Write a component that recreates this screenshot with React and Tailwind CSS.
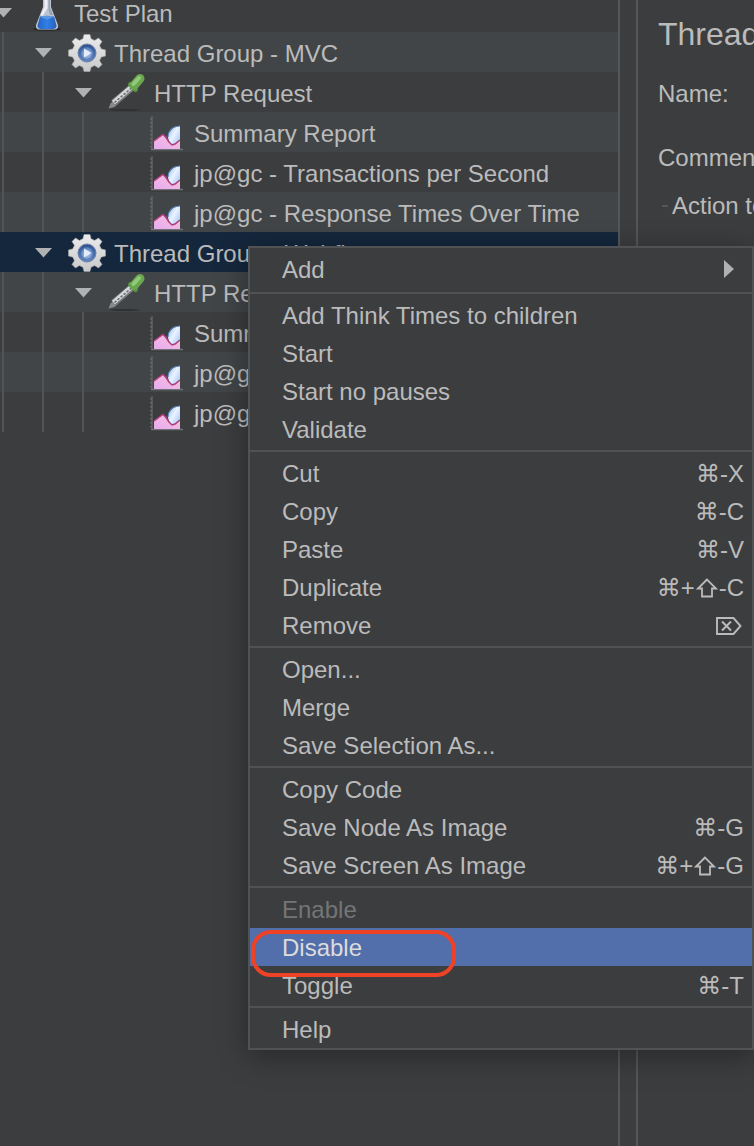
import { useId } from "react";

function FlaskIcon() {
  const id = useId();
  return (
    <svg width="32" height="36" viewBox="0 0 32 36" aria-hidden="true">
      <defs>
        <linearGradient id={id} x1="0" x2="1">
          <stop offset="0" stopColor="#2a63bd" />
          <stop offset="0.5" stopColor="#2f80ea" />
          <stop offset="1" stopColor="#2a5fb4" />
        </linearGradient>
      </defs>
      <ellipse cx="16" cy="34" rx="14" ry="1.8" fill="#27292c" />
      <path d="M11.500 0h9l-.5 4v8l7 18q.5 4-3 4.500h-16q-3.500-.5-3-4.500L12 12V4z" fill="#bcc4d2" />
      <path d="M13.500 0h3v13l-5 8-2-1 4-8z" fill="#eef0f5" />
      <path d="M17.500 3h1.500v10l3 7h-3l-1.500-6z" fill="#98a0b1" />
      <path d="M9 21.500h14l2.500 9q0 3-3 3.500h-13q-3-.5-3-3.500z" fill={`url(#${id})`} />
      <path d="M9 22l7-1.500L23 22l-7 2.500z" fill="#5b97e2" />
    </svg>
  );
}

function GearIcon() {
  const id = useId();
  return (
    <svg width="38" height="38" viewBox="0 0 38 38" aria-hidden="true">
      <defs>
        <linearGradient id={`${id}a`} x1="0" y1="0" x2="0" y2="1">
          <stop offset="0" stopColor="#ececec" />
          <stop offset="1" stopColor="#c9c9c9" />
        </linearGradient>
        <linearGradient id={`${id}b`} x1="0" y1="0" x2="0" y2="1">
          <stop offset="0" stopColor="#2f4f8c" />
          <stop offset="1" stopColor="#6288c6" />
        </linearGradient>
        <radialGradient id={`${id}c`} cx="0.5" cy="0.6" r="0.55">
          <stop offset="0" stopColor="#c4d8f3" />
          <stop offset="1" stopColor="#5379b8" />
        </radialGradient>
      </defs>
      <circle cx="19" cy="19" r="14.500" fill={`url(#${id}a)`} stroke="#a2a3a4" strokeWidth="0.600" />
      <path
        d="M16 .5h6l1.200 4.500 3.300 1.500L30.500 4 34 7.500l-2.500 4 1.500 3.300L37.500 16v6L33 23.200l-1.500 3.300 2.500 4-3.500 3.500-4-2.500-3.300 1.500L22 37.500h-6L14.800 33l-3.300-1.500-4 2.500L4 30.500l2.500-4L5 23.200.5 22v-6L5 14.800l1.500-3.300L4 7.500 7.500 4l4 2.500L14.800 5z"
        fill={`url(#${id}a)`}
        stroke="#a2a3a4"
        strokeWidth="0.600"
      />
      <circle cx="19" cy="19" r="9" fill={`url(#${id}b)`} stroke="#6c82ab" strokeWidth="1" />
      <circle cx="19" cy="19" r="6" fill={`url(#${id}c)`} />
      <path d="M16 14.500l7.500 4.500-7.500 4.500z" fill="#e3ecfa" />
    </svg>
  );
}

function PipetteIcon() {
  return (
    <svg width="38" height="38" viewBox="0 0 38 38" aria-hidden="true">
      <ellipse cx="17" cy="36" rx="15" ry="1" fill="#2f3032" />
      <path d="M0.500 34.500l2-5 4-4 4 4-4 3.500z" fill="#88898b" />
      <path d="M5.500 29L25 12.500" stroke="#77797b" strokeWidth="7" />
      <path d="M5.500 28.500L24 12.500" stroke="#d6d7d8" strokeWidth="4.500" />
      <path d="M6.500 28.500L24 13.500" stroke="#66686a" strokeWidth="1.500" strokeDasharray="2.500 1.500" />
      <path d="M22.500 10.500l5 5" stroke="#56943d" strokeWidth="5" strokeLinecap="round" />
      <path d="M26 11.500l6-7" stroke="#69a64f" strokeWidth="9" strokeLinecap="round" />
      <path d="M25.500 10l5.500-6" stroke="#93c97a" strokeWidth="4" strokeLinecap="round" />
    </svg>
  );
}

function ChartIcon() {
  const id = useId();
  return (
    <svg width="36" height="36" viewBox="0 0 36 36" aria-hidden="true">
      <defs>
        <linearGradient id={`${id}a`} x1="0" y1="0" x2="1" y2="1">
          <stop offset="0" stopColor="#8fb6ee" />
          <stop offset="0.45" stopColor="#eaf3ff" />
          <stop offset="1" stopColor="#94bbf2" />
        </linearGradient>
        <linearGradient id={`${id}b`} x1="0" y1="1" x2="1" y2="0">
          <stop offset="0" stopColor="#e9a9f0" />
          <stop offset="1" stopColor="#f4c6da" />
        </linearGradient>
      </defs>
      <path d="M3 1v33" stroke="#5f6264" strokeWidth="1.500" />
      <path d="M2 3v30" stroke="#66696b" strokeWidth="2" strokeDasharray="1.500 2.500" />
      <path d="M2 34.500h32" stroke="#707375" strokeWidth="1.500" />
      <path d="M31 11v17l-7 4-4-6q-2-4 0-8 3-6 11-7z" fill={`url(#${id}a)`} />
      <path d="M19 22q0-5 3-8 3-3 9-3" fill="none" stroke="#5c86cf" strokeWidth="1" />
      <path d="M5 34v-8l4-3 5-4 3 3 3 5 3 3 3-1 5-4v9z" fill={`url(#${id}b)`} />
      <path d="M5 26l4-3 5-3.500 3 3 3 4.500 3 3 3-1 5-4" fill="none" stroke="#b13c78" strokeWidth="1.500" />
    </svg>
  );
}

const ICONS = { flask: FlaskIcon, gear: GearIcon, pipette: PipetteIcon, chart: ChartIcon };

const ROWS = [
  { label: "Test Plan", icon: "flask", level: 0, open: true },
  { label: "Thread Group - MVC", icon: "gear", level: 1, open: true },
  { label: "HTTP Request", icon: "pipette", level: 2, open: true },
  { label: "Summary Report", icon: "chart", level: 3 },
  { label: "jp@gc - Transactions per Second", icon: "chart", level: 3 },
  { label: "jp@gc - Response Times Over Time", icon: "chart", level: 3 },
  { label: "Thread Group - Webflux", icon: "gear", level: 1, open: true, selected: true },
  { label: "HTTP Request", icon: "pipette", level: 2, open: true },
  { label: "Summary Report", icon: "chart", level: 3 },
  { label: "jp@gc - Transactions per Second", icon: "chart", level: 3 },
  { label: "jp@gc - Response Times Over Time", icon: "chart", level: 3 },
];

function TreeRow({ row, index }) {
  const Icon = ICONS[row.icon];
  const background = row.selected ? "bg-[#15273d]" : index % 2 ? "bg-[#414547]" : "bg-[#3c3d3f]";
  return (
    <li className={`flex h-10 items-center ${background}`}>
      {Array.from({ length: row.level }, (_, i) => (
        <span key={i} className="flex h-full w-10 shrink-0 pl-0.5">
          {!row.selected && <span className="w-0.5 bg-[#525456]" />}
        </span>
      ))}
      <button className="flex h-full items-center pt-0.5 whitespace-nowrap">
        <span className="flex w-7 shrink-0">
          {row.open && (
            <svg width="18" height="10" viewBox="0 0 18 10" className="-ml-1.5 shrink-0" aria-hidden="true">
              <path d="M1 0h17L9.500 9.500z" fill="#afb1b3" />
            </svg>
          )}
        </span>
        <span className="flex w-10 shrink-0 justify-center pr-0.5">
          <Icon />
        </span>
        <span className="pt-0.5 pl-1.5">{row.label}</span>
      </button>
    </li>
  );
}

function ShiftKey() {
  return (
    <svg width="22" height="20" viewBox="0 0 22 20" role="img" aria-label="Shift" className="mx-px">
      <path d="M11 1.500L2 10.500H6V18.500H16V10.500H20z" fill="none" stroke="currentColor" strokeWidth="1.800" />
    </svg>
  );
}

function DeleteKey() {
  return (
    <svg width="26" height="18" viewBox="0 0 26 18" role="img" aria-label="Delete" className="mr-0.5">
      <path d="M1 1h16.500l7 8-7 8H1z" fill="none" stroke="currentColor" strokeWidth="1.900" />
      <path d="M6 4.500l9 9M15 4.500l-9 9" stroke="currentColor" strokeWidth="2" />
    </svg>
  );
}

const MENU = [
  [{ label: "Add", submenu: true }],
  [{ label: "Add Think Times to children" }, { label: "Start" }, { label: "Start no pauses" }, { label: "Validate" }],
  [
    { label: "Cut", keys: "⌘-X" },
    { label: "Copy", keys: "⌘-C" },
    { label: "Paste", keys: "⌘-V" },
    { label: "Duplicate", keys: <>⌘+<ShiftKey />-C</> },
    { label: "Remove", keys: <DeleteKey /> },
  ],
  [{ label: "Open..." }, { label: "Merge" }, { label: "Save Selection As..." }],
  [
    { label: "Copy Code" },
    { label: "Save Node As Image", keys: "⌘-G" },
    { label: "Save Screen As Image", keys: <>⌘+<ShiftKey />-G</> },
  ],
  [{ label: "Enable", disabled: true }, { label: "Disable", active: true }, { label: "Toggle", keys: "⌘-T" }],
  [{ label: "Help" }],
];

function MenuItem({ item }) {
  const height = item.submenu ? "h-[42px]" : "h-[38px]";
  const color = item.active
    ? "bg-[#526eab] text-[#dcdcdc]"
    : item.disabled
      ? "text-[#747576]"
      : "text-[#bbbbbb]";
  return (
    <button
      role="menuitem"
      disabled={item.disabled}
      className={`relative flex w-full items-center justify-between pt-0.5 pr-2 pl-8 text-left ${height} ${color}`}
    >
      <span>{item.label}</span>
      {item.keys && <span className="flex items-center">{item.keys}</span>}
      {item.submenu && (
        <svg width="10" height="18" viewBox="0 0 10 18" className="mr-2.5 mb-0.5" aria-hidden="true">
          <path d="M0 0l10 9-10 9z" fill="#afb1b3" />
        </svg>
      )}
      {item.active && (
        <span className="absolute top-0.5 left-px z-10 h-[47px] w-[205px] rounded-[20px] border-4 border-[#ee4226]" />
      )}
    </button>
  );
}

export default function App() {
  return (
    <div className="relative flex min-h-screen overflow-hidden bg-[#3c3d3f] font-['Liberation_Sans','DejaVu_Sans',sans-serif] text-[24px] leading-8 text-[#bbbbbb]">
      <nav className="min-w-0 flex-1 overflow-hidden border-r-2 border-[#555657]" aria-label="Test plan">
        <ul className="-mt-2">
          {ROWS.map((row, i) => (
            <TreeRow key={i} row={row} index={i} />
          ))}
        </ul>
      </nav>
      <main className="ml-4 w-[118px] shrink-0 overflow-hidden border-l-2 border-[#555657] pl-5 whitespace-nowrap">
        <h1 className="mt-3.5 text-[32px] leading-10">Thread Group</h1>
        <p className="mt-6">Name:</p>
        <p className="mt-8">Comments:</p>
        <div className="mt-4 flex items-center">
          <span className="mr-1 ml-1 h-0.5 w-1.5 shrink-0 bg-[#555657]" />
          <span>Action to be taken after a Sampler error</span>
        </div>
      </main>
      <div
        role="menu"
        className="absolute top-[246px] right-0 left-[248px] border-2 border-[#515253] bg-[#3c3d3f] shadow-[0_6px_28px_rgba(0,0,0,0.35)]"
      >
        {MENU.map((group, i) => (
          <div key={i} role="group" className="border-[#515253] not-first:mt-0.5 not-first:border-t-2 not-first:pt-0.5">
            {group.map((item) => (
              <MenuItem key={item.label} item={item} />
            ))}
          </div>
        ))}
      </div>
    </div>
  );
}
